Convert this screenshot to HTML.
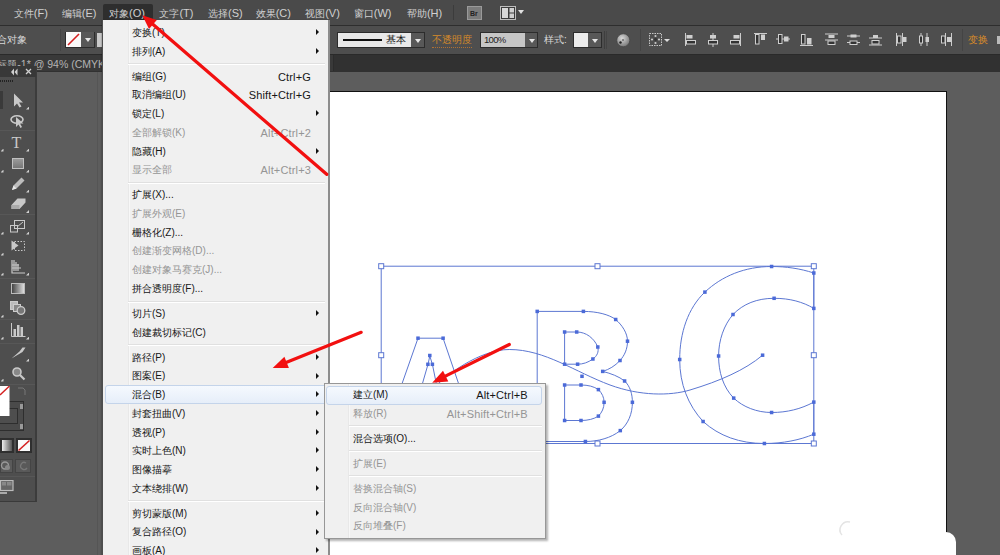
<!DOCTYPE html>
<html><head><meta charset="utf-8">
<style>
*{margin:0;padding:0;box-sizing:border-box}
html,body{width:1000px;height:555px;overflow:hidden;background:#5d5d5d;font-family:"Liberation Sans",sans-serif}
.a{position:absolute}
#menubar{left:0;top:0;width:1000px;height:25px;background:#4a4a4a}
#menubar span{position:absolute;top:5.5px;font-size:10px;line-height:14px;color:#d0d0d0;white-space:nowrap}
#menubar i{font-style:normal;font-size:11px}
#ctrl{left:0;top:24.5px;width:1000px;height:30px;background:#4e4e4e;border-top:1.5px solid #2e2e2e;border-bottom:1px solid #2c2c2c}
#tabbar{left:0;top:54px;width:1000px;height:18px;background:#313131;border-top:1px solid #2a2a2a}
#artboard{left:329px;top:91px;width:618px;height:470px;background:#fff;border:1px solid #111}
#tools{left:0;top:66px;width:37px;height:436px;background:#4e4e4e;border-right:2px solid #3c3c3c;border-bottom:1px solid #3a3a3a}
.sepl{left:0;width:35px;height:1px;background:#444;border-bottom:1px solid #575757}
.ind{width:3px;height:3px;background:#d0d0d0;clip-path:polygon(100% 0,100% 100%,0 100%)}
.dd{background:#585858}
.grp{position:absolute;border:1px solid #2c2c2c}
.dd::after{content:"";position:absolute;left:3.5px;top:5.5px;border-left:3px solid transparent;border-right:3px solid transparent;border-top:4px solid #e6e6e6}
#menu{left:102px;top:20px;width:228px;height:540px;background:#f0f0f0;border-left:1px solid #4e4e4e;box-shadow:-1px 0 1px rgba(0,0,0,.15);border-right:2px solid #8d8d8d}
.mi{position:absolute;font-size:10px;color:#161616;white-space:nowrap;line-height:14px}
.sc{position:absolute;font-size:11px;color:#161616;white-space:nowrap;line-height:14px;text-align:right;letter-spacing:0.15px}
.mi.d,.sc.d{color:#959595}
.ar{position:absolute;width:0;height:0;border-left:3.5px solid #111;border-top:3px solid transparent;border-bottom:3px solid transparent}
.sep{position:absolute;height:2px;border-top:1px solid #e0e0e0;border-bottom:1px solid #fff}
.gut{position:absolute;top:0;bottom:0;width:2px;border-left:1px solid #e8e8e8;border-right:1px solid #f7f7f7}
.hl{position:absolute;border:1px solid #c4d4ea;border-radius:3px;background:linear-gradient(#f5f9fe,#e6eef9)}
#sub{left:324.3px;top:382.6px;width:221.5px;height:156px;background:#f0f0f0;border:1px solid #979797;box-shadow:2px 2px 2px rgba(0,0,0,.3)}
</style></head><body>
<div id="menubar" class="a">
<div class="a" style="left:103px;top:4px;width:50px;height:21px;background:#2e2e2e;border-radius:2px 2px 0 0"></div>
<span style="left:109px">对象<i>(O)</i></span>
<span style="left:13.8px">文件<i>(F)</i></span>
<span style="left:61.8px">编辑<i>(E)</i></span>
<span style="left:159.4px">文字<i>(T)</i></span>
<span style="left:208px">选择<i>(S)</i></span>
<span style="left:255.7px">效果<i>(C)</i></span>
<span style="left:305.2px">视图<i>(V)</i></span>
<span style="left:353.8px">窗口<i>(W)</i></span>
<span style="left:406.9px">帮助<i>(H)</i></span>
<div class="a" style="left:453px;top:5px;width:1px;height:15px;background:#3c3c3c"></div>
<svg class="a" style="left:467px;top:6px" width="16" height="14"><rect x="0.5" y="0.5" width="14" height="13" fill="#7b7b7b" stroke="#9a9a9a"/><text x="3" y="10" font-size="7" font-family="Liberation Sans" fill="#222" font-weight="bold">Br</text></svg>
<svg class="a" style="left:500px;top:6px" width="26" height="14"><rect x="0.5" y="0.5" width="15" height="13" fill="#3c3c3c" stroke="#bdbdbd"/><rect x="2" y="2" width="6" height="10" fill="#d8d8d8"/><rect x="9.5" y="2" width="4.5" height="4.5" fill="#d0d0d0"/><rect x="9.5" y="7.5" width="4.5" height="4.5" fill="#d0d0d0"/><path d="M18 4h6l-3 4z" fill="#e0e0e0"/></svg>
</div>
<div id="ctrl" class="a"></div>
<div class="a" style="left:-13px;top:33px;font-size:10px;line-height:14px;color:#d8d8d8;white-space:nowrap">混合对象</div>
<div class="a" style="left:60px;top:29px;width:1px;height:22px;background:#444"></div>
<div class="grp" style="left:65px;top:32px;width:30px;height:16px"></div>
<div class="grp" style="left:337px;top:32px;width:88px;height:16px"></div>
<div class="grp" style="left:480px;top:32px;width:58px;height:16px"></div>
<div class="grp" style="left:573px;top:32px;width:29px;height:16px"></div>
<svg class="a" style="left:66px;top:32px" width="15" height="15"><rect width="15" height="15" fill="#fafafa"/><line x1="2" y1="13" x2="13" y2="2" stroke="#d42020" stroke-width="1.6"/></svg>
<div class="a dd" style="left:81px;top:32px;width:13px;height:15px"></div>
<div class="a" style="left:97px;top:33px;width:5px;height:14px;background:#c9c9c9"></div>
<div class="a" style="left:338px;top:33px;width:73px;height:14px;background:#e9e9e9"></div>
<div class="a" style="left:343px;top:39px;width:39px;height:2px;background:#111"></div>
<div class="a" style="left:386px;top:33px;font-family:'Liberation Serif',serif;font-size:10px;line-height:14px;color:#111;white-space:nowrap">基本</div>
<div class="a dd" style="left:411px;top:33px;width:13px;height:14px"></div>
<div class="a" style="left:432px;top:33px;font-size:10px;line-height:14px;color:#d58a2a;white-space:nowrap;border-bottom:1px dotted #b07030">不透明度</div>
<div class="a" style="left:481px;top:33px;width:44px;height:14px;background:#c6c6c6;font-size:9.5px;letter-spacing:-0.7px;line-height:14px;color:#222;padding-left:3px">100%</div>
<div class="a dd" style="left:525px;top:33px;width:12px;height:14px"></div>
<div class="a" style="left:544px;top:33px;font-size:10px;line-height:14px;color:#d8d8d8;white-space:nowrap">样式:</div>
<div class="a" style="left:574px;top:33px;width:14px;height:14px;background:#ececec"></div>
<div class="a dd" style="left:588px;top:33px;width:13px;height:14px"></div>
<div class="a" style="left:604px;top:31px;width:1px;height:18px;background:#3e3e3e"></div><div class="a" style="left:606px;top:31px;width:1px;height:18px;background:#444"></div>
<svg class="a" style="left:616px;top:33px" width="15" height="15"><defs><radialGradient id="gg" cx="40%" cy="35%" r="65%"><stop offset="0" stop-color="#d8d8d8"/><stop offset="1" stop-color="#7a7a7a"/></radialGradient></defs><circle cx="7.3" cy="7.3" r="6.5" fill="url(#gg)" stroke="#3c3c3c" stroke-width="0.6"/><circle cx="4.5" cy="9.5" r="1.2" fill="#222"/><circle cx="7" cy="7" r="0.8" fill="#333"/></svg>
<div class="a" style="left:640px;top:29px;width:1px;height:22px;background:#444"></div>
<svg class="a" style="left:649px;top:33px" width="24" height="14"><rect x="0.5" y="0.5" width="12" height="12" fill="none" stroke="#c8c8c8" stroke-dasharray="1.5 1"/><circle cx="6.5" cy="3" r="1.1" fill="#ccc"/><circle cx="6.5" cy="10" r="1.1" fill="#ccc"/><circle cx="3" cy="6.5" r="1.1" fill="#ccc"/><circle cx="10" cy="6.5" r="1.1" fill="#ccc"/><circle cx="6.5" cy="6.5" r="1.4" fill="#333"/><path d="M15 6h6l-3 3z" fill="#ddd"/></svg>
<svg class="a" style="left:685px;top:33px" width="14" height="14"><line x1="0.5" y1="0" x2="0.5" y2="13" stroke="#ccc"/><rect x="1.5" y="2" width="6" height="3.5" fill="#cfcfcf"/><rect x="1.5" y="7.5" width="9" height="3.5" fill="#333" stroke="#cfcfcf"/></svg>
<svg class="a" style="left:707px;top:33px" width="14" height="14"><line x1="6" y1="0" x2="6" y2="14" stroke="#ccc"/><rect x="3" y="2" width="6" height="3.5" fill="#cfcfcf"/><rect x="1.5" y="7.5" width="9" height="3.5" fill="#333" stroke="#cfcfcf"/></svg>
<svg class="a" style="left:729px;top:33px" width="14" height="14"><line x1="11.5" y1="0" x2="11.5" y2="13" stroke="#ccc"/><rect x="4.5" y="2" width="6" height="3.5" fill="#cfcfcf"/><rect x="1.5" y="7.5" width="9" height="3.5" fill="#333" stroke="#cfcfcf"/></svg>
<svg class="a" style="left:754px;top:33px" width="14" height="14"><line x1="0" y1="0.5" x2="13" y2="0.5" stroke="#ccc"/><rect x="1.5" y="1.5" width="3.5" height="9.5" fill="#333" stroke="#cfcfcf"/><rect x="7" y="1.5" width="4" height="5.5" fill="#cfcfcf"/></svg>
<svg class="a" style="left:776px;top:33px" width="14" height="14"><line x1="0" y1="6" x2="14" y2="6" stroke="#ccc"/><rect x="2.5" y="1.5" width="3.5" height="9" fill="#333" stroke="#cfcfcf"/><rect x="8" y="3.5" width="4.5" height="5" fill="#cfcfcf"/></svg>
<svg class="a" style="left:800px;top:33px" width="14" height="14"><line x1="0" y1="12.5" x2="13" y2="12.5" stroke="#ccc"/><rect x="1.5" y="1.5" width="3.5" height="9.5" fill="#333" stroke="#cfcfcf"/><rect x="7" y="5" width="4.5" height="6.5" fill="#cfcfcf"/></svg>
<svg class="a" style="left:825px;top:33px" width="14" height="14"><line x1="0" y1="1" x2="13" y2="1" stroke="#ccc"/><line x1="0" y1="7" x2="13" y2="7" stroke="#ccc"/><rect x="3.5" y="2" width="6" height="3" fill="#cfcfcf"/><rect x="3" y="8" width="7" height="3.5" fill="#333" stroke="#cfcfcf"/></svg>
<svg class="a" style="left:847px;top:33px" width="14" height="14"><line x1="0" y1="3" x2="13" y2="3" stroke="#ccc"/><line x1="0" y1="9.5" x2="13" y2="9.5" stroke="#ccc"/><rect x="3.5" y="1.5" width="6" height="3" fill="#cfcfcf"/><rect x="3" y="8" width="7" height="3.5" fill="#333" stroke="#cfcfcf"/></svg>
<svg class="a" style="left:869px;top:33px" width="14" height="14"><line x1="0" y1="5" x2="13" y2="5" stroke="#ccc"/><line x1="0" y1="12" x2="13" y2="12" stroke="#ccc"/><rect x="4" y="2" width="5" height="3" fill="#cfcfcf"/><rect x="3" y="7.5" width="7" height="3.5" fill="#333" stroke="#cfcfcf"/></svg>
<svg class="a" style="left:896px;top:33px" width="14" height="14"><line x1="0.5" y1="0" x2="0.5" y2="13" stroke="#ccc"/><line x1="6.5" y1="0" x2="6.5" y2="13" stroke="#ccc"/><rect x="1.5" y="3" width="3.5" height="7" fill="#333" stroke="#cfcfcf"/><rect x="7" y="4" width="3.5" height="5" fill="#cfcfcf"/></svg>
<svg class="a" style="left:918px;top:33px" width="14" height="14"><line x1="3" y1="0" x2="3" y2="13" stroke="#ccc"/><line x1="9" y1="0" x2="9" y2="13" stroke="#ccc"/><rect x="1.5" y="3" width="3" height="7" fill="#333" stroke="#cfcfcf"/><rect x="7.5" y="4" width="3.5" height="5" fill="#cfcfcf"/></svg>
<svg class="a" style="left:940px;top:33px" width="14" height="14"><line x1="5.5" y1="0" x2="5.5" y2="13" stroke="#ccc"/><line x1="11.5" y1="0" x2="11.5" y2="13" stroke="#ccc"/><rect x="1.5" y="3" width="3.5" height="7" fill="#333" stroke="#cfcfcf"/><rect x="7" y="4" width="4" height="5" fill="#cfcfcf"/></svg>
<div class="a" style="left:962px;top:29px;width:1px;height:22px;background:#444"></div>
<div class="a" style="left:968px;top:33px;font-size:10px;line-height:14px;color:#d58a2a;white-space:nowrap">变换</div>
<div class="a" style="left:997px;top:36px;width:5px;height:8px;background:#bbb"></div>
<div id="tabbar" class="a"></div>
<div class="a" style="left:0;top:55px;width:334px;height:16px;background:#393939;border-right:1px solid #2c2c2c"></div>
<div class="a" style="left:-12.7px;top:57px;font-size:10px;line-height:14px;color:#b4b4b4;white-space:nowrap">未标题<span style="font-size:10.5px">-1* @ 94% (CMYK/预览)</span></div>
<div id="artboard" class="a"></div>
<div class="a" style="left:97px;top:72px;width:1px;height:483px;background:#555"></div>
<svg class="a" style="left:0;top:0" width="1000" height="555" viewBox="0 0 1000 555">
<g fill="none" stroke="#5c77d2" stroke-width="1">
<rect x="381.2" y="266.2" width="432.6" height="177.3"/>
<path d="M418,338.2 L443.1,338.2 L479,443.5 M418,338.2 L381,443.5"/>
<path d="M420,392 L428,364.3 L429.8,356 L432.4,364.3 L438,392"/>
<path d="M537.2,311.4 L583.4,311.4 C597,311.4 609,314.5 615.7,319.5 C622,325 627.5,333 627.5,341.2 C627.5,349 624.5,355.5 620,360.5 C615,366 609,369.5 602.7,371.4 C611,373.5 619,376.5 624.6,381 C630,386 632.4,394 632.4,402.3 C632.4,414 628,424 620.3,430.6 C611,438 598,441.5 585.4,441.5 L537.2,441.5 Z"/>
<path d="M564.6,332 L576.7,332 C586,332 594,338 597.8,347 C599,352 597,356 592.9,359 C588,362.5 583,364.2 577.6,364.2 L564.6,364.2 Z"/>
<path d="M564.6,385 L581,385 C588,385 594,386.5 598.4,389.6 C602,393 604.1,397.5 604.1,402.3 C604.1,408 602,412.5 598.4,416.1 C594,419 588,420.5 581,420.5 L564.6,420.5 Z"/>
<path d="M813.8,273 C800,268.5 786,266.5 771.6,266.5 C745,266.5 722,276 704.9,292.1 C688,308 679.7,333 679.7,359.5 C679.7,384 688,405 703.1,421.5 C719,436 740,443.5 764.4,443.5 C783,443.5 800,440 813.8,434.2 L813.8,402.1 C801,409 787,412.5 771.6,412.5 C757,412.5 743,407 733.7,398.1 C723,387 718.6,372 718.6,356 C718.6,340 724,325 733,314.5 C743,304 757,298.3 774.1,298.3 C790,298.3 803,302 813.8,308.4 Z"/>
<path d="M430,392 C445,375 480,349.5 509.3,349.5 C545,349.5 575,372 610,385 C640,396 670,396 690,390 C720,381 745,370 762.6,355.2"/>
</g>
<g fill="#4b6ad8">
<rect x="535.45" y="309.65" width="3.5" height="3.5"/>
<rect x="581.65" y="309.65" width="3.5" height="3.5"/>
<rect x="613.95" y="317.75" width="3.5" height="3.5"/>
<rect x="625.75" y="339.45" width="3.5" height="3.5"/>
<rect x="618.25" y="358.75" width="3.5" height="3.5"/>
<rect x="600.95" y="369.65" width="3.5" height="3.5"/>
<rect x="622.85" y="379.25" width="3.5" height="3.5"/>
<rect x="630.65" y="400.55" width="3.5" height="3.5"/>
<rect x="618.55" y="428.85" width="3.5" height="3.5"/>
<rect x="583.65" y="439.75" width="3.5" height="3.5"/>
<rect x="535.45" y="439.75" width="3.5" height="3.5"/>
<rect x="562.85" y="330.25" width="3.5" height="3.5"/>
<rect x="574.95" y="330.25" width="3.5" height="3.5"/>
<rect x="596.05" y="345.25" width="3.5" height="3.5"/>
<rect x="591.15" y="357.25" width="3.5" height="3.5"/>
<rect x="575.85" y="362.45" width="3.5" height="3.5"/>
<rect x="562.85" y="362.45" width="3.5" height="3.5"/>
<rect x="562.85" y="383.25" width="3.5" height="3.5"/>
<rect x="579.25" y="383.25" width="3.5" height="3.5"/>
<rect x="596.65" y="387.85" width="3.5" height="3.5"/>
<rect x="602.35" y="400.55" width="3.5" height="3.5"/>
<rect x="596.65" y="414.35" width="3.5" height="3.5"/>
<rect x="579.25" y="418.75" width="3.5" height="3.5"/>
<rect x="562.85" y="418.75" width="3.5" height="3.5"/>
<rect x="812.05" y="271.25" width="3.5" height="3.5"/>
<rect x="769.85" y="264.75" width="3.5" height="3.5"/>
<rect x="703.15" y="290.35" width="3.5" height="3.5"/>
<rect x="677.95" y="357.75" width="3.5" height="3.5"/>
<rect x="701.35" y="419.75" width="3.5" height="3.5"/>
<rect x="762.65" y="441.75" width="3.5" height="3.5"/>
<rect x="812.05" y="432.45" width="3.5" height="3.5"/>
<rect x="812.05" y="400.35" width="3.5" height="3.5"/>
<rect x="769.85" y="410.75" width="3.5" height="3.5"/>
<rect x="731.95" y="396.35" width="3.5" height="3.5"/>
<rect x="716.85" y="354.25" width="3.5" height="3.5"/>
<rect x="731.25" y="312.75" width="3.5" height="3.5"/>
<rect x="772.35" y="296.55" width="3.5" height="3.5"/>
<rect x="812.05" y="306.65" width="3.5" height="3.5"/>
<rect x="760.85" y="353.45" width="3.5" height="3.5"/>
<rect x="580.25" y="374.55" width="3.5" height="3.5"/>
<rect x="416.25" y="336.45" width="3.5" height="3.5"/>
<rect x="441.35" y="336.45" width="3.5" height="3.5"/>
<rect x="428.05" y="353.75" width="3.5" height="3.5"/>
<rect x="426.15" y="362.55" width="3.5" height="3.5"/>
<rect x="430.65" y="362.55" width="3.5" height="3.5"/>
</g>
<g fill="#fff" stroke="#5c77d2" stroke-width="1">
<rect x="378.7" y="263.7" width="5" height="5"/>
<rect x="595.0" y="263.7" width="5" height="5"/>
<rect x="811.3" y="263.7" width="5" height="5"/>
<rect x="378.7" y="352.7" width="5" height="5"/>
<rect x="811.3" y="352.7" width="5" height="5"/>
<rect x="378.7" y="441.0" width="5" height="5"/>
<rect x="595.0" y="441.0" width="5" height="5"/>
<rect x="811.3" y="441.0" width="5" height="5"/>
</g>
<circle cx="946" cy="542" r="10" fill="#fff"/><rect x="940" y="542" width="16" height="14" fill="#fff"/>
<path d="M842,535 A8,8 0 0 1 850,522" stroke="#e4e4e4" stroke-width="1.5" fill="none"/>
</svg>
<div id="tools" class="a"></div>
<div class="a" style="left:0;top:66px;width:36px;height:11px;background:#383838"></div>
<svg class="a" style="left:10px;top:67px" width="24" height="10"><path d="M4 1.5L1 5l3 3.5zM7.5 1.5L4.5 5l3 3.5z" fill="#cfcfcf"/><path d="M16 2l5 5M21 2l-5 5" stroke="#d0d0d0" stroke-width="1.3"/></svg>
<div class="a" style="left:0;top:80px;width:13px;height:2px;background:repeating-linear-gradient(90deg,#222 0 1px,transparent 1px 2px)"></div>
<div class="a" style="left:0;top:91px;width:3px;height:18px;background:#3a3a3a"></div>
<svg class="a" style="left:13px;top:93px" width="10" height="15"><path d="M1 0.5v13l3-3 2.5 4 2-1-2.5-4h4z" fill="#c9c9c9"/></svg>
<svg class="a" style="left:10px;top:114px" width="16" height="14"><ellipse cx="7" cy="5.5" rx="6" ry="3.8" fill="none" stroke="#c9c9c9" stroke-width="1.6"/><path d="M6 3v10l2.5-2.5 2 3.5 1.5-1-2-3.5h3.5z" fill="#c9c9c9"/></svg>
<div class="a sepl" style="top:130px"></div>
<div class="a" style="left:11.5px;top:134.5px;font-family:'Liberation Serif',serif;font-size:16px;line-height:16px;color:#c9c9c9">T</div>
<div class="a" style="left:11.5px;top:157.5px;width:12.5px;height:11px;background:linear-gradient(#9a9a9a,#777);border:1px solid #c0c0c0"></div>
<svg class="a" style="left:11px;top:177px" width="14" height="14"><path d="M1 13l1.5-4.5 8-8 3 3-8 8z" fill="#bdbdbd"/><path d="M1 13l1.5-4.5 3 3z" fill="#e8e8e8"/></svg>
<svg class="a" style="left:11px;top:198px" width="15" height="12"><path d="M0.5 7l6-6.5h8l-6 6.5zM0.5 7v4h8l6-6.5V0.5l-6 6.5z" fill="#c8c8c8"/><path d="M0.5 7h8v4h-8z" fill="#aaa"/></svg>
<div class="a sepl" style="top:214px"></div>
<svg class="a" style="left:10px;top:220px" width="16" height="13"><rect x="4.5" y="0.5" width="10" height="8" fill="none" stroke="#c9c9c9"/><rect x="0.5" y="5.5" width="7" height="6.5" fill="none" stroke="#c9c9c9"/><path d="M7 7l6-5" stroke="#c9c9c9"/></svg>
<svg class="a" style="left:11px;top:240px" width="15" height="12"><rect x="3.5" y="1.5" width="10" height="9" fill="none" stroke="#c9c9c9" stroke-dasharray="1.5 1.5"/><path d="M0.5 0.5l7 5-7 5z" fill="#c9c9c9"/></svg>
<svg class="a" style="left:11px;top:260px" width="15" height="14"><path d="M1 0v13h13M3 0v11M5 2v9M7 4v7M1 5h7M1 8h9" stroke="#c9c9c9" stroke-width="1.2" fill="none"/></svg>
<div class="a sepl" style="top:277.5px"></div>
<div class="a" style="left:11px;top:283px;width:13.5px;height:11px;background:linear-gradient(90deg,#444,#ddd);border:1px solid #bbb"></div>
<svg class="a" style="left:10px;top:301px" width="16" height="14"><rect x="0.5" y="0.5" width="7" height="8" fill="#bbb" stroke="#ccc"/><rect x="3.5" y="3.5" width="7" height="7" fill="#888" stroke="#ccc"/><circle cx="11" cy="9.5" r="3.8" fill="#777" stroke="#ccc" stroke-width="1.3"/></svg>
<div class="a sepl" style="top:319px"></div>
<svg class="a" style="left:11px;top:323px" width="15" height="14"><path d="M0.5 0v13.5h14" stroke="#c9c9c9" fill="none"/><rect x="2.5" y="6" width="2.5" height="7" fill="#c9c9c9"/><rect x="6" y="2" width="2.5" height="11" fill="#c9c9c9"/><rect x="9.5" y="4" width="2.5" height="9" fill="#c9c9c9"/></svg>
<div class="a sepl" style="top:342.5px"></div>
<svg class="a" style="left:11px;top:347px" width="15" height="12"><path d="M0.5 11.5l8-7 3 -4h3l-3 4.5z" fill="#c9c9c9"/></svg>
<svg class="a" style="left:12px;top:367px" width="14" height="14"><circle cx="5" cy="5" r="4" fill="#888" stroke="#c9c9c9" stroke-width="1.6"/><path d="M8 8l4.5 4.5" stroke="#c9c9c9" stroke-width="2.2"/></svg>
<div class="a sepl" style="top:383.5px"></div>
<div class="a" style="left:-1px;top:401px;width:25px;height:30px;border:1px solid #2e2e2e;background:#4a4a4a"></div>
<div class="a" style="left:-1px;top:408px;width:19px;height:16px;border:1px solid #2e2e2e;background:#4e4e4e"></div>
<svg class="a" style="left:0;top:386px" width="10" height="30"><rect width="9.5" height="30" fill="#fff"/><line x1="0" y1="9" x2="9.5" y2="0" stroke="#d41f1f" stroke-width="1.4"/></svg>
<svg class="a" style="left:17px;top:386px" width="10" height="11"><path d="M1 2h5l2 2v5" stroke="#777" fill="none"/></svg>
<div class="a" style="left:20px;top:404px;width:3px;height:5px;background:#999"></div>
<div class="a" style="left:20px;top:424px;width:3px;height:5px;background:#999"></div>
<div class="a" style="left:0;top:438px;width:14px;height:15px;background:#2f2f2f"></div>
<div class="a" style="left:2px;top:440px;width:10px;height:11px;background:linear-gradient(90deg,#eee,#555)"></div>
<div class="a" style="left:16px;top:438px;width:16px;height:15px;background:#2f2f2f"></div>
<svg class="a" style="left:18px;top:440px" width="12" height="11"><rect width="12" height="11" fill="#fafafa"/><line x1="0.5" y1="10.5" x2="11.5" y2="0.5" stroke="#d41f1f" stroke-width="1.5"/></svg>
<div class="a" style="left:0;top:459px;width:13px;height:14px;background:#5a5a5a;border:1px solid #444"></div>
<svg class="a" style="left:0;top:461px" width="12" height="10"><circle cx="5" cy="4.5" r="3.5" fill="none" stroke="#999" stroke-width="1.4"/><circle cx="7.5" cy="6.5" r="2.5" fill="#888"/></svg>
<div class="a" style="left:15px;top:459px;width:16px;height:14px;background:#595959;border:1px solid #444"></div>
<svg class="a" style="left:19px;top:461px" width="10" height="10"><path d="M7 2A3.5 3.5 0 1 0 8 7" stroke="#777" stroke-width="1.3" fill="none"/></svg>
<div class="a sepl" style="top:476px"></div>
<svg class="a" style="left:0;top:480px" width="14" height="16"><rect x="0.5" y="0.5" width="12.5" height="10" fill="#666" stroke="#bbb" stroke-width="1.2"/><rect x="2" y="2" width="4" height="3.5" fill="#888"/><rect x="7" y="2" width="4.5" height="3.5" fill="#888"/><rect x="0" y="12" width="7" height="2" fill="#aaa"/></svg>
<div class="a ind" style="left:26.0px;top:106.5px"></div>
<div class="a ind" style="left:0.5px;top:148.5px"></div>
<div class="a ind" style="left:26.0px;top:148.5px"></div>
<div class="a ind" style="left:0.5px;top:169.5px"></div>
<div class="a ind" style="left:26.0px;top:169.5px"></div>
<div class="a ind" style="left:26.0px;top:189.5px"></div>
<div class="a ind" style="left:26.0px;top:210.0px"></div>
<div class="a ind" style="left:0.5px;top:231.5px"></div>
<div class="a ind" style="left:26.0px;top:231.5px"></div>
<div class="a ind" style="left:0.5px;top:252.5px"></div>
<div class="a ind" style="left:0.5px;top:272.5px"></div>
<div class="a ind" style="left:26.0px;top:272.5px"></div>
<div class="a ind" style="left:0.5px;top:314.5px"></div>
<div class="a ind" style="left:0.5px;top:336.5px"></div>
<div class="a ind" style="left:26.0px;top:336.5px"></div>
<div class="a ind" style="left:26.0px;top:358.5px"></div>
<div class="a ind" style="left:0.5px;top:378.5px"></div>
<div id="menu" class="a">
<div class="gut" style="left:25px"></div>
<div class="hl" style="left:1.5px;width:222px;top:365px;height:18.5px"></div>
<div class="mi" style="left:29px;top:5.9px">变换(T)</div>
<div class="ar" style="left:212.5px;top:9.1px"></div>
<div class="mi" style="left:29px;top:24.6px">排列(A)</div>
<div class="ar" style="left:212.5px;top:27.8px"></div>
<div class="sep" style="left:25px;right:3px;top:43.4px"></div>
<div class="mi" style="left:29px;top:49.7px">编组(G)</div>
<div class="sc" style="right:17px;top:49.7px">Ctrl+G</div>
<div class="mi" style="left:29px;top:68.4px">取消编组(U)</div>
<div class="sc" style="right:17px;top:68.4px">Shift+Ctrl+G</div>
<div class="mi" style="left:29px;top:87.1px">锁定(L)</div>
<div class="ar" style="left:212.5px;top:90.3px"></div>
<div class="mi d" style="left:29px;top:105.8px">全部解锁(K)</div>
<div class="sc d" style="right:17px;top:105.8px">Alt+Ctrl+2</div>
<div class="mi" style="left:29px;top:124.5px">隐藏(H)</div>
<div class="ar" style="left:212.5px;top:127.7px"></div>
<div class="mi d" style="left:29px;top:143.2px">显示全部</div>
<div class="sc d" style="right:17px;top:143.2px">Alt+Ctrl+3</div>
<div class="sep" style="left:25px;right:3px;top:162.0px"></div>
<div class="mi" style="left:29px;top:168.3px">扩展(X)...</div>
<div class="mi d" style="left:29px;top:187.0px">扩展外观(E)</div>
<div class="mi" style="left:29px;top:205.7px">栅格化(Z)...</div>
<div class="mi d" style="left:29px;top:224.4px">创建渐变网格(D)...</div>
<div class="mi d" style="left:29px;top:243.1px">创建对象马赛克(J)...</div>
<div class="mi" style="left:29px;top:261.8px">拼合透明度(F)...</div>
<div class="sep" style="left:25px;right:3px;top:280.6px"></div>
<div class="mi" style="left:29px;top:286.9px">切片(S)</div>
<div class="ar" style="left:212.5px;top:290.1px"></div>
<div class="mi" style="left:29px;top:305.6px">创建裁切标记(C)</div>
<div class="sep" style="left:25px;right:3px;top:324.3px"></div>
<div class="mi" style="left:29px;top:330.7px">路径(P)</div>
<div class="ar" style="left:212.5px;top:333.9px"></div>
<div class="mi" style="left:29px;top:349.4px">图案(E)</div>
<div class="ar" style="left:212.5px;top:352.6px"></div>
<div class="mi" style="left:29px;top:368.1px">混合(B)</div>
<div class="ar" style="left:212.5px;top:371.3px"></div>
<div class="mi" style="left:29px;top:386.8px">封套扭曲(V)</div>
<div class="ar" style="left:212.5px;top:390.0px"></div>
<div class="mi" style="left:29px;top:405.5px">透视(P)</div>
<div class="ar" style="left:212.5px;top:408.7px"></div>
<div class="mi" style="left:29px;top:424.2px">实时上色(N)</div>
<div class="ar" style="left:212.5px;top:427.4px"></div>
<div class="mi" style="left:29px;top:442.9px">图像描摹</div>
<div class="ar" style="left:212.5px;top:446.1px"></div>
<div class="mi" style="left:29px;top:461.6px">文本绕排(W)</div>
<div class="ar" style="left:212.5px;top:464.8px"></div>
<div class="sep" style="left:25px;right:3px;top:480.3px"></div>
<div class="mi" style="left:29px;top:486.7px">剪切蒙版(M)</div>
<div class="ar" style="left:212.5px;top:489.9px"></div>
<div class="mi" style="left:29px;top:505.4px">复合路径(O)</div>
<div class="ar" style="left:212.5px;top:508.6px"></div>
<div class="mi" style="left:29px;top:524.1px">画板(A)</div>
<div class="ar" style="left:212.5px;top:527.3px"></div>
</div>
<div id="sub" class="a">
<div class="gut" style="left:23px"></div>
<div class="hl" style="left:0.5px;width:216px;top:2.5px;height:18.5px"></div>
<div class="mi" style="left:27.69999999999999px;top:4.3px">建立(M)</div>
<div class="sc" style="right:17px;top:4.3px">Alt+Ctrl+B</div>
<div class="mi d" style="left:27.69999999999999px;top:23.0px">释放(R)</div>
<div class="sc d" style="right:17px;top:23.0px">Alt+Shift+Ctrl+B</div>
<div class="sep" style="left:23.69999999999999px;right:3px;top:41.7px"></div>
<div class="mi" style="left:27.69999999999999px;top:48.1px">混合选项(O)...</div>
<div class="sep" style="left:23.69999999999999px;right:3px;top:66.8px"></div>
<div class="mi d" style="left:27.69999999999999px;top:73.2px">扩展(E)</div>
<div class="sep" style="left:23.69999999999999px;right:3px;top:91.9px"></div>
<div class="mi d" style="left:27.69999999999999px;top:98.3px">替换混合轴(S)</div>
<div class="mi d" style="left:27.69999999999999px;top:117.0px">反向混合轴(V)</div>
<div class="mi d" style="left:27.69999999999999px;top:135.7px">反向堆叠(F)</div>
</div>
<svg class="a" style="left:0;top:0" width="1000" height="555">
<line x1="326.7" y1="174.3" x2="151.4" y2="23.1" stroke="#f21010" stroke-width="3.3" stroke-linecap="round"/><path d="M142.3,15.3 L156.8,19.9 L149.0,29.0 Z" fill="#f21010"/>
<line x1="509.3" y1="344.5" x2="443.8" y2="376.9" stroke="#f21010" stroke-width="3.2" stroke-linecap="round"/><path d="M432.2,382.7 L443.0,370.7 L448.3,381.4 Z" fill="#f21010"/>
<line x1="361.2" y1="332.3" x2="284.8" y2="363.0" stroke="#f21010" stroke-width="3.2" stroke-linecap="round"/><path d="M272.7,367.9 L284.4,356.7 L288.9,367.9 Z" fill="#f21010"/>
</svg>
</body></html>
